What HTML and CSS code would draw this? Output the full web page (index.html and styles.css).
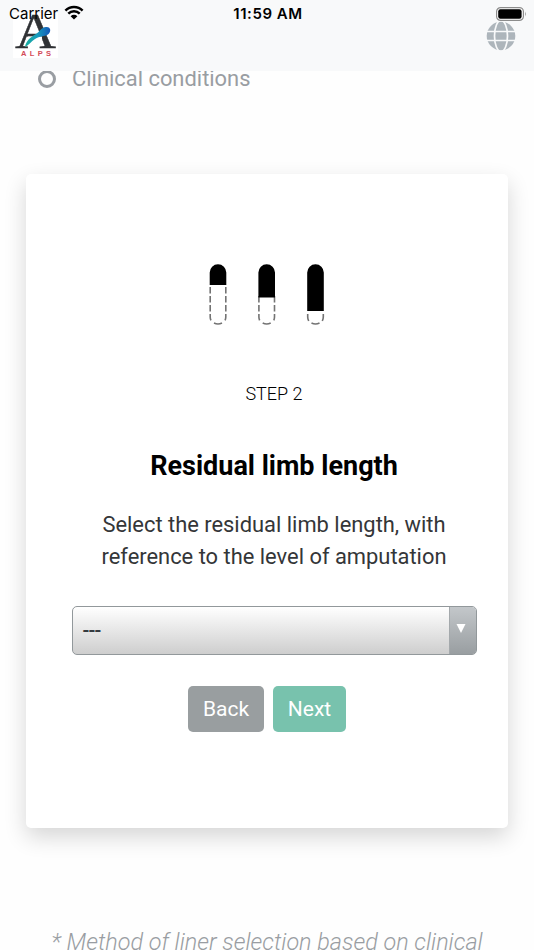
FILE: index.html
```html
<!DOCTYPE html>
<html lang="en">
<head>
    <meta charset="UTF-8">
    <meta name="viewport" content="width=device-width, initial-scale=1.0">
    <title>ALPS - Residual limb length</title>
    <link rel="stylesheet" href="styles.css">
</head>
<body>
    <header class="navbar">
        <div class="status-bar">
            <div class="carrier">
                <span>Carrier</span>
                <svg class="wifi" width="20" height="15" viewBox="0 0 20 15">
                    <path d="M1.4 5.6a12.3 12.3 0 0 1 17.2 0M4.3 8.6a8.1 8.1 0 0 1 11.4 0" fill="none" stroke="#000" stroke-width="2.5"/>
                    <path d="M10 14.6l-3.4-3.4a4.9 4.9 0 0 1 6.8 0z"/>
                </svg>
            </div>
            <span class="time">11:59 AM</span>
            <svg class="battery" width="31" height="14" viewBox="0 0 31 14">
                <rect x=".6" y=".6" width="26.8" height="12.8" rx="4" fill="#fff" stroke="#8c8c8c" stroke-width="1.2"/>
                <rect x="2.2" y="2.2" width="23.4" height="9.6" rx="2.2"/>
                <path d="M29 4.5q1.6 2.5 0 5z" fill="#8c8c8c"/>
            </svg>
        </div>
        <div class="nav-content">
            <svg class="logo" width="45" height="45" viewBox="0 0 45 45">
                <rect width="45" height="45" fill="#fff"/>
                <text class="logo-letter" x="2" y="35" textLength="41" lengthAdjust="spacingAndGlyphs">A</text>
                <path d="M15 23.500h14v5H15z" fill="#fff"/>
                <path d="M12 34C13 28 17 24.500 23 21C27 18.500 28 14.500 33 14C38 13.500 38.500 19 35 21.500C31 24 27 22.500 22 26C18 28.500 16 32 12 34z" fill="url(#swoosh)"/>
                <text class="logo-name" x="8" y="43.300" textLength="30">ALPS</text>
                <defs>
                    <linearGradient id="swoosh">
                        <stop offset="0" stop-color="#18ad9c"/>
                        <stop offset=".5" stop-color="#169bbd"/>
                        <stop offset="1" stop-color="#1456b8"/>
                    </linearGradient>
                </defs>
            </svg>
            <svg class="globe" width="30" height="30" viewBox="0 0 30 30">
                <circle cx="15" cy="15" r="14.300" fill="#adb5bb"/>
                <g fill="none" stroke="#f8f9fa" stroke-width="1.700">
                    <ellipse cx="15" cy="15" rx="6.500" ry="15.500"/>
                    <path d="M0 10.500h30M0 19.500h30"/>
                </g>
            </svg>
        </div>
    </header>
    <main>
        <div class="option">
            <span class="radio"></span>
            <span>Clinical conditions</span>
        </div>
        <section class="card">
            <svg class="limbs" width="118" height="64" viewBox="0 0 118 64">
                <g fill="none" stroke="#737373" stroke-width="1.600">
                    <path d="M2.200 24v30q0 2 1 4M17.800 24v30q0 2-1 4" stroke-dasharray="6.500 2.500"/>
                    <path d="M50.900 33v21q0 2 1 4M66.500 33v21q0 2-1 4" stroke-dasharray="6.500 2.500"/>
                    <path d="M99.700 51v3q0 2 1 4M115.300 51v3q0 2-1 4"/>
                    <path d="M6 60q4 2 8 0M54.700 60q4 2 8 0M103.500 60q4 2 8 0"/>
                </g>
                <path d="M1.700 22V9.500a8.300 8.300 0 0 1 16.600 0V22zM50.400 34.500V9.500a8.300 8.300 0 0 1 16.600 0V34.500zM99.200 48V9.500a8.300 8.300 0 0 1 16.600 0V48z"/>
            </svg>
            <div class="card-text">
                <p class="step">STEP 2</p>
                <h2>Residual limb length</h2>
                <p class="description">Select the residual limb length, with<br>reference to the level of amputation</p>
                <div class="select">
                    <span class="select-value">---</span>
                    <span class="select-arrow"><svg width="10" height="9" viewBox="0 0 10 9"><path d="M.5 0h9L5 9z" fill="#fff"/></svg></span>
                </div>
            </div>
            <div class="buttons">
                <button type="button" class="btn btn-back">Back</button>
                <button type="button" class="btn btn-next">Next</button>
            </div>
        </section>
        <p class="note">* Method of liner selection based on clinical</p>
    </main>
</body>
</html>
```
FILE: styles.css
```css
* {
    box-sizing: border-box;
}
body {
    font-family: Roboto, sans-serif;
    margin: 0;
    height: 950px;
    overflow: hidden;
    background-color: #fefefe;
}
h2, p {
    margin: 0;
}
svg {
    display: block;
}
.navbar {
    position: relative;
    height: 71px;
    background-color: #f8f9fa;
    z-index: 1;
}
.status-bar {
    position: absolute;
    top: 0;
    left: 0;
    right: 0;
    z-index: 1;
    display: grid;
    grid-template-columns: 1fr auto 1fr;
    align-items: center;
    height: 27px;
    padding: 0 7px 0 9px;
    font-family: Inter, sans-serif;
    font-size: 15px;
    line-height: 27px;
}
.carrier {
    display: flex;
    align-items: center;
    gap: 6px;
}
.wifi {
    margin-bottom: 2px;
}
.time {
    font-weight: 600;
    letter-spacing: 0.55px;
}
.battery {
    justify-self: end;
}
.nav-content {
    display: flex;
    justify-content: space-between;
    padding: 13px 18px 0 13px;
}
.logo-letter {
    font-family: "Liberation Serif", serif;
    font-size: 50px;
    fill: #303235;
    stroke: #303235;
    stroke-width: 0.4px;
}
.logo-name {
    font-family: "Liberation Sans", sans-serif;
    font-size: 7.5px;
    font-weight: bold;
    fill: #d34a57;
}
.globe {
    margin-top: 8px;
}
.option {
    display: flex;
    align-items: center;
    gap: 16px;
    height: 32px;
    margin-top: -8px;
    padding-left: 38px;
    color: #999da2;
    font-size: 21.9px;
    line-height: 32px;
}
.radio {
    width: 18px;
    height: 18px;
    border: 3px solid #999da2;
    border-radius: 50%;
}
.card {
    display: flex;
    flex-direction: column;
    align-items: center;
    width: 482px;
    height: 654px;
    margin: 79px 0 0 26px;
    padding-top: 89px;
    background-color: #fff;
    border-radius: 5px;
    box-shadow: 0 9px 22px rgba(0, 0, 0, 0.16);
}
.card-text {
    width: 405px;
    margin: 55px 0 0 14px;
    text-align: center;
}
.step {
    font-size: 18px;
    font-weight: 300;
    line-height: 24px;
}
h2 {
    margin-top: 43px;
    font-size: 27px;
    font-weight: 700;
    line-height: 34px;
}
.description {
    margin-top: 26px;
    color: #343638;
    font-size: 21.9px;
    line-height: 32px;
}
.select {
    display: flex;
    height: 49px;
    margin-top: 33px;
    border: 1px solid #92989b;
    border-radius: 5px;
    background: linear-gradient(#fff, #cecece);
    overflow: hidden;
}
.select-value {
    flex: 1;
    padding-left: 10px;
    color: #343a40;
    font-size: 20px;
    font-weight: 500;
    letter-spacing: -0.8px;
    line-height: 47px;
    text-align: left;
}
.select-arrow {
    display: flex;
    justify-content: center;
    width: 27px;
    padding: 17px 3px 0 0;
    border-left: 1px solid #a4a9ac;
    background: linear-gradient(#c3c7ca, #999ea1);
}
.buttons {
    display: flex;
    gap: 9px;
    margin-top: 31px;
}
.btn {
    width: 76px;
    height: 46px;
    padding: 0;
    border: none;
    border-radius: 5px;
    color: #fff;
    font-family: inherit;
    font-size: 21px;
}
.btn-back {
    background-color: #999ea0;
}
.btn-next {
    width: 73px;
    background-color: #78c2ad;
}
.note {
    margin-top: 97px;
    color: #999da2;
    font-size: 23.4px;
    font-style: italic;
    font-weight: 300;
    line-height: 34px;
    text-align: center;
    white-space: nowrap;
}
```
